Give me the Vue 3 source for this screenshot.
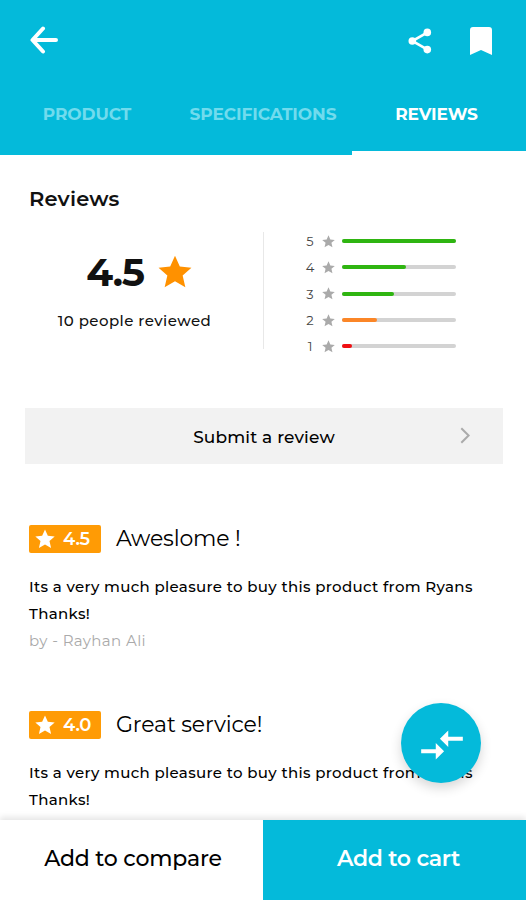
<template>
  <div class="page">
    <header class="header">
      <div class="toolbar">
        <button class="icon-button" aria-label="Back">
          <svg class="icon-back" viewBox="0 0 28 28">
            <path d="M13 2.5L2.5 14L13 25.5M3 14H26" />
          </svg>
        </button>
        <div class="toolbar-actions">
          <button class="icon-button" aria-label="Share">
            <svg class="icon-share" viewBox="0 0 24 26">
              <path d="M19.5 4.3L4.3 13L19.5 21.7" />
              <circle cx="19.3" cy="4.4" r="3.8" />
              <circle cx="4.3" cy="13" r="3.8" />
              <circle cx="19.3" cy="21.6" r="3.8" />
            </svg>
          </button>
          <button class="icon-button" aria-label="Bookmark">
            <svg class="icon-bookmark" viewBox="0 0 22 28">
              <path d="M3 0H19Q22 0 22 3V28L11 23L0 28V3Q0 0 3 0Z" />
            </svg>
          </button>
        </div>
      </div>
      <nav class="tabs">
        <button
          v-for="tab in tabs"
          :key="tab.id"
          class="tab"
          :class="{ active: tab.id === activeTab }"
          @click="activeTab = tab.id"
        >
          {{ tab.label }}
        </button>
      </nav>
    </header>

    <main class="content">
      <h2 class="section-title">Reviews</h2>

      <section class="summary">
        <div class="score">
          <div class="score-value">
            <span class="score-number">4.5</span>
            <svg class="score-star" viewBox="0 0 24 24"><path :d="starPath" /></svg>
          </div>
          <div class="score-count">10 people reviewed</div>
        </div>
        <div class="bars">
          <div v-for="row in ratings" :key="row.stars" class="bar-row">
            <span class="bar-label">{{ row.stars }}</span>
            <svg class="bar-star" viewBox="0 0 24 24"><path :d="starPath" /></svg>
            <div class="bar-track">
              <div class="bar-fill" :class="row.color" :style="{ width: row.percent + '%' }"></div>
            </div>
          </div>
        </div>
      </section>

      <button class="submit">
        <span>Submit a review</span>
        <svg class="chevron" viewBox="0 0 10 17"><path d="M1.3 1.3L8.6 8.5L1.3 15.7" /></svg>
      </button>

      <article v-for="(review, i) in reviews" :key="i" class="review">
        <div class="review-head">
          <span class="badge">
            <svg class="badge-star" viewBox="0 0 24 24"><path :d="starPath" /></svg>
            <span>{{ review.rating }}</span>
          </span>
          <h3 class="review-title">{{ review.title }}</h3>
        </div>
        <p class="review-text">{{ review.text }}<br />Thanks!</p>
        <p v-if="review.author" class="review-author">by - {{ review.author }}</p>
      </article>
    </main>

    <button class="fab" aria-label="Compare">
      <svg viewBox="0 0 24 24">
        <path d="M9.01 14H2v2h7.01v3L13 15l-3.99-4v3zm5.98-1v-3H22V8h-7.01V5L11 9l3.99 4z" />
      </svg>
    </button>

    <footer class="footer">
      <button class="compare">Add to compare</button>
      <button class="cart">Add to cart</button>
    </footer>
  </div>
</template>

<script setup>
import { ref } from 'vue';

const starPath = 'M12 .6L15.4 8.2L23.6 9L17.4 14.5L19.3 22.8L12 18.5L4.7 22.8L6.6 14.5L.4 9L8.6 8.2Z';

const activeTab = ref('reviews');

const tabs = [
  { id: 'product', label: 'PRODUCT' },
  { id: 'specifications', label: 'SPECIFICATIONS' },
  { id: 'reviews', label: 'REVIEWS' },
];

const ratings = [
  { stars: 5, percent: 100, color: 'green' },
  { stars: 4, percent: 56.5, color: 'green' },
  { stars: 3, percent: 46, color: 'green' },
  { stars: 2, percent: 31, color: 'orange' },
  { stars: 1, percent: 9, color: 'red' },
];

const reviews = [
  {
    rating: '4.5',
    title: 'Aweslome !',
    text: 'Its a very much pleasure to buy this product from Ryans',
    author: 'Rayhan Ali',
  },
  {
    rating: '4.0',
    title: 'Great service!',
    text: 'Its a very much pleasure to buy this product from Ryans',
    author: '',
  },
];
</script>

<style>
body {
  margin: 0;
}
</style>

<style scoped>
.page {
  position: relative;
  display: flex;
  flex-direction: column;
  width: 100%;
  height: 900px;
  overflow: hidden;
  background: #fff;
  color: #111;
  font-family: 'Montserrat', 'Inter', sans-serif;
}

button {
  padding: 0;
  border: none;
  background: none;
  color: inherit;
  font: inherit;
  cursor: pointer;
}

svg {
  display: block;
  flex: none;
}

h2,
h3,
p {
  margin: 0;
}

.header {
  flex: none;
  height: 155px;
  background: #04bada;
  color: #fff;
}

.toolbar {
  display: flex;
  justify-content: space-between;
  align-items: center;
  height: 81px;
  padding: 0 34px 0 30px;
  box-sizing: border-box;
}

.toolbar-actions {
  display: flex;
  align-items: center;
  gap: 38px;
}

.icon-back {
  width: 28px;
  height: 28px;
  margin-bottom: 1px;
  fill: none;
  stroke: #fff;
  stroke-width: 4;
  stroke-linecap: round;
  stroke-linejoin: round;
}

.icon-share {
  width: 24px;
  height: 26px;
  fill: #fff;
}

.icon-share path {
  fill: none;
  stroke: #fff;
  stroke-width: 2.6;
}

.icon-bookmark {
  width: 22px;
  height: 28px;
  fill: #fff;
}

.tabs {
  display: grid;
  grid-template-columns: 174px 178px 1fr;
  height: 74px;
}

.tab {
  padding-bottom: 9px;
  color: #71dbed;
  font-size: 17px;
  font-weight: 700;
  letter-spacing: -0.1px;
  box-sizing: border-box;
}

.tab.active {
  padding: 0 5px 5px 0;
  border-bottom: 4px solid #fff;
  color: #fff;
}

.content {
  flex: 1;
  min-height: 0;
  overflow: hidden;
  padding: 0 23px 0 25px;
}

.section-title {
  padding: 30px 0 0 4px;
  font-size: 21px;
  line-height: 28px;
  font-weight: 600;
  letter-spacing: 0.2px;
}

.summary {
  display: flex;
  height: 117px;
  margin-top: 19px;
}

.score {
  display: flex;
  flex-direction: column;
  align-items: center;
  width: 239px;
  padding-right: 10px;
  border-right: 1px solid #e8e8e8;
  box-sizing: border-box;
}

.score-value {
  display: flex;
  align-items: center;
  gap: 14px;
  height: 80px;
}

.score-number {
  font-size: 39px;
  font-weight: 700;
  letter-spacing: -1.2px;
}

.score-star {
  width: 34px;
  height: 34px;
  fill: #ff9100;
}

.score-count {
  margin: 2px 9px 0 0;
  font-size: 15px;
  line-height: 14px;
  font-weight: 500;
  letter-spacing: 0.45px;
}

.bars {
  display: flex;
  flex-direction: column;
  padding-left: 41px;
  margin-top: -4px;
}

.bar-row {
  display: flex;
  flex: none;
  align-items: center;
  height: 26.3px;
}

.bar-label {
  width: 10px;
  color: #444;
  font-size: 13px;
  text-align: center;
}

.bar-star {
  width: 13px;
  height: 13px;
  margin: 0 7px;
  fill: #aaa;
}

.bar-track {
  width: 114px;
  height: 4px;
  border-radius: 2px;
  background: #d3d3d3;
}

.bar-fill {
  height: 4px;
  border-radius: 2px;
}

.bar-fill.green {
  background: #2fb511;
}

.bar-fill.orange {
  background: #fb8627;
}

.bar-fill.red {
  background: #f00f12;
}

.submit {
  display: flex;
  align-items: center;
  width: 100%;
  height: 56px;
  margin-top: 59px;
  padding-right: 33px;
  background: #f2f2f2;
  color: #000;
  font-size: 17px;
  font-weight: 500;
  letter-spacing: 0.15px;
}

.submit span {
  flex: 1;
  padding: 2px 0 0 43px;
}

.chevron {
  width: 10px;
  height: 17px;
  margin-bottom: 1px;
  fill: none;
  stroke: #aaa;
  stroke-width: 2;
}

.review {
  padding: 61px 0 0 4px;
}

.review + .review {
  padding-top: 57px;
}

.review-head {
  display: flex;
  align-items: center;
  gap: 15px;
}

.badge {
  display: flex;
  align-items: center;
  gap: 8px;
  width: 72px;
  height: 28px;
  padding-left: 6px;
  border-radius: 2px;
  background: #ff9b05;
  color: #fff;
  font-size: 18px;
  font-weight: 600;
  letter-spacing: -0.2px;
  box-sizing: border-box;
}

.badge-star {
  width: 20px;
  height: 20px;
  fill: #fff;
}

.review-title {
  font-size: 22px;
  line-height: 28px;
  font-weight: 400;
  letter-spacing: -0.15px;
  color: #000;
}

.review-text,
.review-author {
  font-size: 15px;
  line-height: 27px;
  font-weight: 500;
  letter-spacing: 0.34px;
  white-space: nowrap;
}

.review-text {
  margin-top: 20px;
  color: #000;
}

.review-author {
  color: #aaa;
  font-weight: 400;
  letter-spacing: 0.4px;
}

.fab {
  position: absolute;
  top: 703px;
  left: 401px;
  display: flex;
  align-items: center;
  justify-content: center;
  width: 80px;
  height: 80px;
  border-radius: 50%;
  background: #04bada;
  box-shadow: 0 5px 12px rgba(0, 0, 0, 0.16);
}

.fab svg {
  width: 50px;
  height: 50px;
  margin: 3px 0 0 1px;
  fill: #fff;
}

.footer {
  position: relative;
  display: flex;
  flex: none;
  height: 80px;
  background: #fff;
  box-shadow: 0 -3px 6px rgba(0, 0, 0, 0.1);
  color: #000;
  font-size: 22px;
}

.compare {
  width: 263px;
  padding: 0 0 4px 3px;
  font-weight: 500;
  letter-spacing: -0.2px;
}

.cart {
  flex: 1;
  padding: 0 0 4px 8px;
  background: #04bada;
  color: #fff;
  font-weight: 600;
  letter-spacing: -0.35px;
}
</style>
